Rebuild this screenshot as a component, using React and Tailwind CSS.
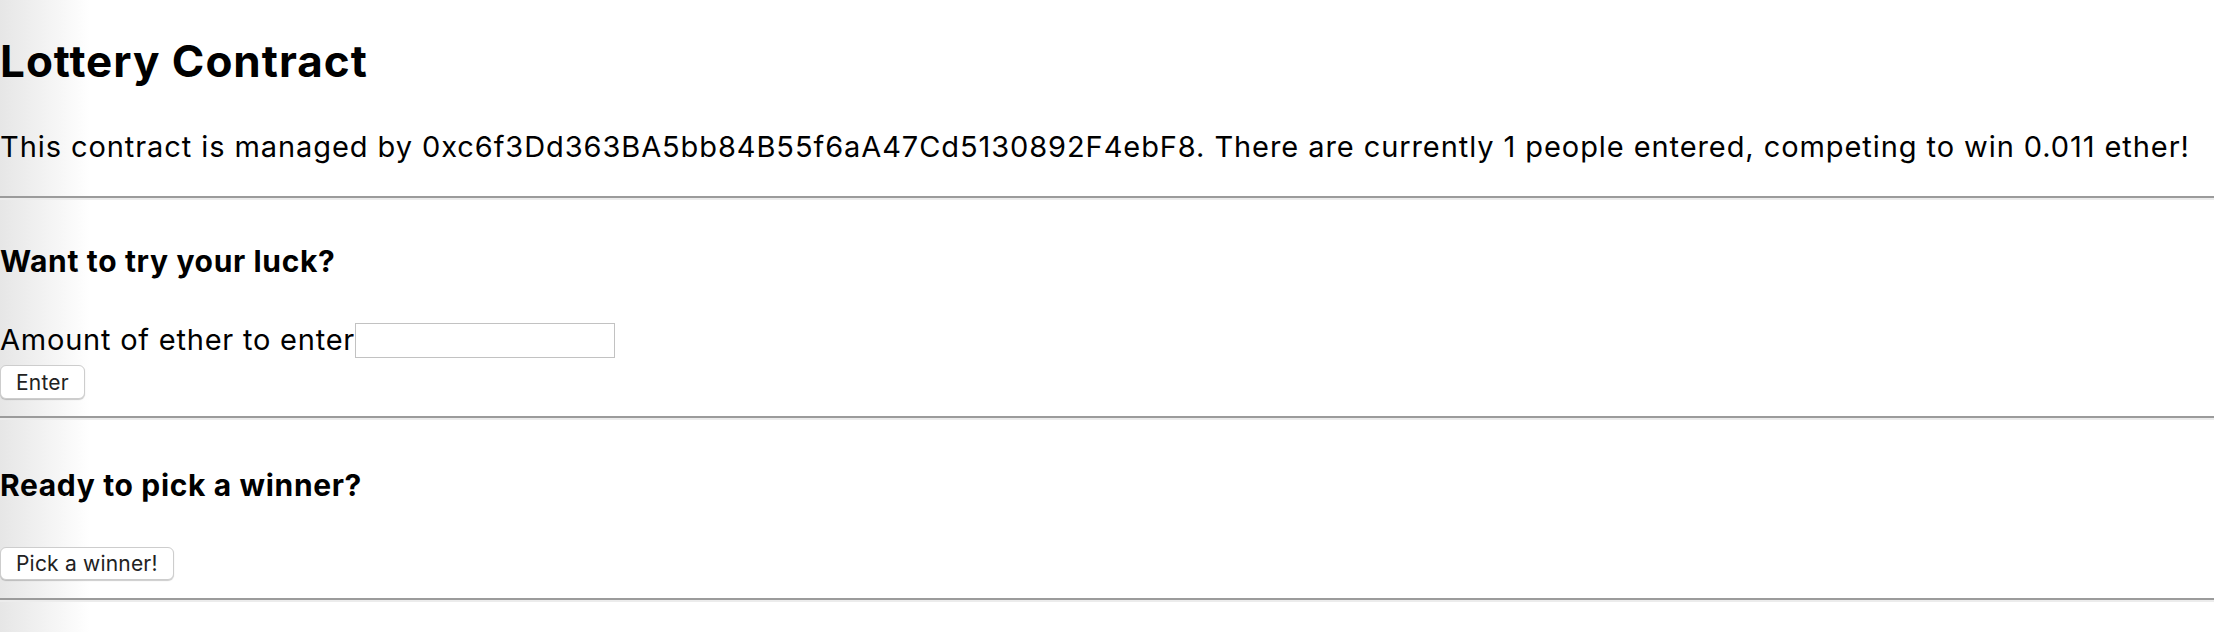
export default function App() {
  const manager = '0xc6f3Dd363BA5bb84B55f6aA47Cd5130892F4ebF8';
  const players = 1;
  const balance = '0.011';

  const Rule = () => (
    <div className="w-full border-t-2 border-b-2 border-t-[#9b9b9b] border-b-[#ececec]" />
  );

  return (
    <div className="min-h-screen w-full bg-[linear-gradient(90deg,#e6e6e6_0px,#ffffff_90px)] font-['Inter',sans-serif] text-black">
      <h1 className="pt-[35px] text-[44px] leading-[52px] font-bold tracking-[1px]">Lottery Contract</h1>
      <p className="mt-[42px] text-[29px] leading-[36px] tracking-[0.92px]">
        This contract is managed by {manager}. There are currently {players} people entered, competing to win {balance} ether!
      </p>
      <div className="mt-[31px]">
        <Rule />
      </div>

      {/* enter form */}
      <h3 className="mt-[43px] text-[30px] leading-[36px] font-bold tracking-[0.65px]">Want to try your luck?</h3>
      <div className="mt-[43px] flex h-[36px] items-center">
        <label className="text-[29px] leading-[36px] tracking-[0.78px]">Amount of ether to enter</label>
        <input className="h-[35px] w-[260px] border border-[#c2c2c2] bg-white outline-none" />
      </div>
      <div className="mt-[7px]">
        <button className="h-[34px] rounded-[6px] border border-[#cdcdcd] bg-white px-[15px] text-[21px] leading-none tracking-[0.2px] text-[#222] shadow-[0_1px_1px_rgba(0,0,0,0.2)]">
          Enter
        </button>
      </div>
      <div className="mt-[17px]">
        <Rule />
      </div>

      {/* pick winner */}
      <h3 className="mt-[47px] text-[30px] leading-[36px] font-bold tracking-[0.65px]">Ready to pick a winner?</h3>
      <div className="mt-[44px]">
        <button className="h-[33px] rounded-[6px] border border-[#cdcdcd] bg-white px-[15px] text-[21px] leading-none tracking-[0.2px] text-[#222] shadow-[0_1px_1px_rgba(0,0,0,0.2)]">
          Pick a winner!
        </button>
      </div>
      <div className="mt-[18px]">
        <Rule />
      </div>
    </div>
  );
}
